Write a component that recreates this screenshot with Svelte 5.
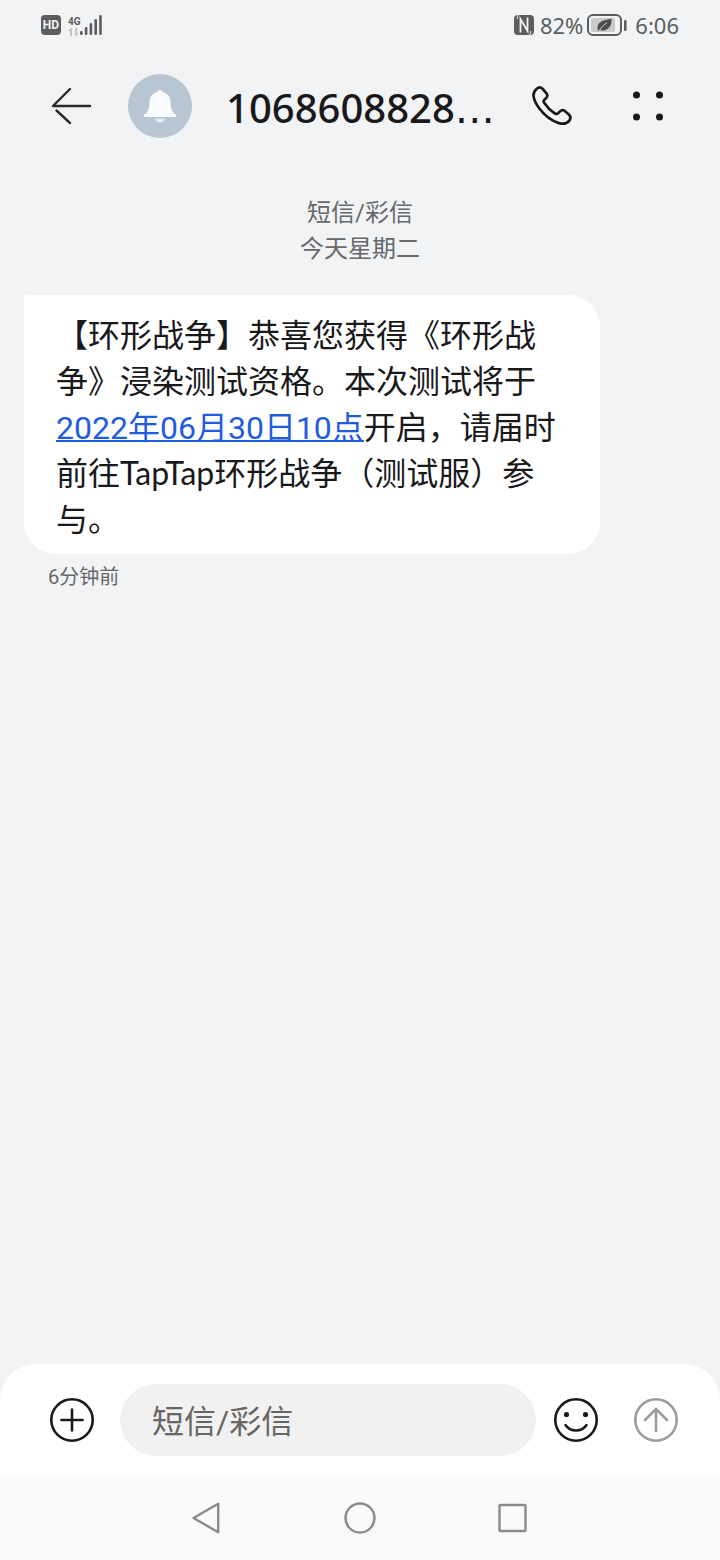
<script lang="ts">
	let draft = $state("");

	const sender = "1068608828";
	const channel = "短信/彩信";
	const day = "今天星期二";
	const sentAt = "6分钟前";
	const signalBars = [4, 8, 12, 16, 20];
</script>

<div class="screen">
	<div class="status-bar">
		<div class="status-group left">
			<span class="hd">HD</span>
			<div class="signal">
				<div class="network">
					<span>4G</span>
					<svg width="12" height="8" viewBox="0 0 12 8" fill="#c2c4c6">
						<path d="M3 0L0 3h2v5h2V0zM8 8l3-3H9V0H7v8z" />
					</svg>
				</div>
				<svg width="22" height="22" viewBox="0 0 22 22" fill="#5c5d5f">
					{#each signalBars as h, i}
						<rect x={i * 4.8} y={21 - h} width="2.6" height={h} rx="1.2" />
					{/each}
				</svg>
			</div>
		</div>
		<div class="status-group">
			<svg width="20" height="20" viewBox="0 0 20 20">
				<path d="M4 0h12q4 0 4 4v12q0 4-4 4H4q-4 0-4-4V4q0-4 4-4z" fill="#5c5d5f" />
				<path d="M6.500 17.500V4L13.500 16V2.500" fill="none" stroke="#f1f3f5" stroke-width="1.800" />
				<path d="M4.500 0Q3 1.500 3.200 4M15.500 20Q17 18.500 16.800 16" fill="none" stroke="#f1f3f5" />
			</svg>
			<span class="percent">82%</span>
			<svg width="40" height="22" viewBox="0 0 40 22">
				<rect x="1" y="1" width="33" height="20" rx="5" fill="none" stroke="#5c5d5f" stroke-width="2" />
				<rect x="4" y="4" width="24" height="14" rx="2" fill="#c9cbcd" />
				<rect x="37" y="6" width="2.6" height="11" rx="1.3" fill="#5c5d5f" />
				<path d="M11 17Q9 10 15 7Q19 5.500 24.500 4.500Q25 12 20.500 15Q17 17.500 13 16z" fill="#4c4d4f" />
				<path d="M12 17Q15 11.500 20 8.500" fill="none" stroke="#c9cbcd" />
			</svg>
			<span class="clock">6:06</span>
		</div>
	</div>

	<header>
		<button class="icon" aria-label="返回">
			<svg width="44" height="40" viewBox="0 0 44 40" fill="none" stroke="#2b2b2d" stroke-width="2.4" stroke-linecap="round" stroke-linejoin="round">
				<path d="M40 20H3L20 3M6.500 24.500L20 37" />
			</svg>
		</button>
		<div class="avatar">
			<svg width="32" height="34" viewBox="0 0 32 34" fill="#fafcfe">
				<path d="M16 1q1.800 0 2.800 2Q26 5 26.500 13q.3 8 3.500 12h1q1 0 1 1.500T30.500 28h-29Q0 28 0 26.500T1 25h1q3.200-4 3.500-12Q6 5 13.200 3q1-2 2.800-2z" />
				<path d="M11 29.500h10q-1 4-5 4t-5-4z" fill="#e3eaf1" />
			</svg>
		</div>
		<h1>{sender}<span class="more-digits">…</span></h1>
		<button class="icon" aria-label="拨打电话">
			<svg width="40" height="40" viewBox="1 1.200 41.800 41.800" fill="none" stroke="#19191b" stroke-width="2.800" stroke-linejoin="round">
				<path d="M6 4Q9 1.500 12 4L16.500 9.500Q17.800 11.500 16 13.500L14 15.500Q12.600 17 13.500 18.500Q18 25.500 25 30Q27 31 28.500 29.500L30.500 27.500Q32.500 25.500 35 27L39.500 31Q42.500 34 40 37.500Q36 42 29 40Q17 36 8.500 24.500Q3 17 2.500 11Q2.500 7 6 4z" />
			</svg>
		</button>
		<button class="icon menu" aria-label="更多">
			<svg width="32" height="32" viewBox="0 0 32 32" fill="#19191b">
				<circle cx="4.500" cy="5" r="3.500" />
				<circle cx="27.500" cy="5" r="3.500" />
				<circle cx="4.500" cy="27" r="3.500" />
				<circle cx="27.500" cy="27" r="3.500" />
			</svg>
		</button>
	</header>

	<main>
		<div class="thread-info">
			<div>{channel}</div>
			<div>{day}</div>
		</div>
		<div class="message">
			<p class="bubble">【环形战争】恭喜您获得《环形战争》浸染测试资格。本次测试将于<a href="#date">2022年06月30日10点</a>开启，请届时前往TapTap环形战争（测试服）参与。</p>
			<time>{sentAt}</time>
		</div>
	</main>

	<form class="composer" onsubmit={(e) => e.preventDefault()}>
		<button class="icon" type="button" aria-label="添加">
			<svg width="46" height="46" viewBox="0 0 46 46" fill="none" stroke="#19191b" stroke-width="2.600" stroke-linecap="round">
				<circle cx="23" cy="23" r="20.700" />
				<path d="M12.500 23h21M23 12.500v21" />
			</svg>
		</button>
		<input type="text" aria-label={channel} placeholder={channel} bind:value={draft} />
		<button class="icon" type="button" aria-label="表情">
			<svg width="46" height="46" viewBox="0 0 46 46" fill="none" stroke="#19191b" stroke-width="2.600" stroke-linecap="round">
				<circle cx="23" cy="23" r="20.700" />
				<path d="M12.500 28q3.500 5.500 10.500 5.500T33.500 28" />
				<g fill="#19191b" stroke="none">
					<circle cx="13.500" cy="17.500" r="2.600" />
					<circle cx="32.500" cy="17.500" r="2.600" />
				</g>
			</svg>
		</button>
		<button class="icon send" type="submit" aria-label="发送">
			<svg width="46" height="46" viewBox="0 0 46 46" fill="none" stroke="#9c9c9c" stroke-width="2.600" stroke-linecap="round" stroke-linejoin="round">
				<circle cx="23" cy="23" r="20.700" />
				<path d="M23 34V12M12 23L23 12L34 23" />
			</svg>
		</button>
	</form>

	<nav>
		<button class="icon" aria-label="后退">
			<svg width="32" height="32" viewBox="0 0 32 32">
				<path d="M26.200 1.800V30.200L1.500 16z" />
			</svg>
		</button>
		<button class="icon" aria-label="主屏幕">
			<svg width="32" height="32" viewBox="0 0 32 32">
				<circle cx="16" cy="16" r="14.500" />
			</svg>
		</button>
		<button class="icon" aria-label="最近任务">
			<svg width="32" height="32" viewBox="0 0 32 32">
				<rect x="3.500" y="3" width="26" height="26" rx="1" />
			</svg>
		</button>
	</nav>
</div>

<style>
	:global(body) {
		margin: 0;
		background: #f1f3f5;
	}
	.screen {
		min-height: 100vh;
		display: flex;
		flex-direction: column;
		font-family: Roboto, "Noto Sans CJK SC", sans-serif;
		color: #19191b;
	}
	.icon {
		display: flex;
		align-items: center;
		justify-content: center;
		padding: 0;
		border: none;
		background: none;
		cursor: pointer;
	}
	svg {
		display: block;
		flex: none;
	}

	.status-bar {
		height: 50px;
		padding: 0 41px;
		display: flex;
		align-items: center;
		justify-content: space-between;
		color: #5c5d5f;
	}
	.status-group {
		display: flex;
		align-items: center;
	}
	.left {
		gap: 7px;
	}
	.hd {
		width: 20px;
		height: 20px;
		line-height: 20px;
		border-radius: 4px;
		background: #5c5d5f;
		color: #f1f3f5;
		font-size: 12px;
		font-weight: 700;
		text-align: center;
	}
	.signal {
		display: flex;
		align-items: flex-end;
	}
	.network {
		width: 12px;
		display: flex;
		flex-direction: column;
		font-size: 10px;
		line-height: 12px;
		font-weight: 700;
	}
	.percent,
	.clock {
		font-family: "Noto Sans", sans-serif;
		font-size: 22px;
		line-height: 32px;
	}
	.percent {
		margin: 0 4px 0 6px;
	}
	.clock {
		margin-left: 8px;
	}

	header {
		height: 112px;
		padding: 0 48px 0 50px;
		display: flex;
		align-items: center;
	}
	.avatar {
		width: 64px;
		height: 64px;
		margin: 0 34px;
		border-radius: 50%;
		background: #b8c6d4;
		display: flex;
		align-items: center;
		justify-content: center;
		flex: none;
	}
	h1 {
		flex: 1;
		margin: 0;
		padding-top: 4px;
		font-family: "Noto Sans", sans-serif;
		font-size: 40px;
		line-height: 56px;
		font-weight: 500;
		white-space: nowrap;
	}
	.more-digits {
		font-family: "DejaVu Sans", sans-serif;
	}
	.menu {
		width: 48px;
		margin-left: 52px;
	}

	main {
		flex: 1;
		padding: 33px 24px;
	}
	.thread-info {
		font-size: 24px;
		line-height: 36px;
		color: #66686a;
		text-align: center;
	}
	.message {
		width: 86%;
		max-width: 576px;
		margin-top: 28px;
	}
	.bubble {
		margin: 0;
		padding: 17px 32px 12px;
		border-radius: 4px 32px 32px 32px;
		background: #fff;
		font-family: Lato, "Noto Sans CJK SC", sans-serif;
		font-size: 32px;
		line-height: 46px;
	}
	.bubble a {
		font-family: Roboto, "Noto Sans CJK SC", sans-serif;
		line-height: 1;
		color: #1f5ce0;
		text-decoration-thickness: 2px;
	}
	time {
		display: block;
		margin: 8px 24px;
		font-size: 20px;
		line-height: 30px;
		color: #66686a;
	}

	.composer {
		padding: 20px 41px 20px 49px;
		display: flex;
		align-items: center;
		border-radius: 36px 36px 0 0;
		background: #fff;
	}
	input {
		flex: 1;
		min-width: 0;
		height: 72px;
		box-sizing: border-box;
		margin: 0 17px 0 25px;
		padding: 4px 32px 0;
		border: none;
		border-radius: 36px;
		background: #f1f1f1;
		font: inherit;
		font-size: 32px;
		color: #19191b;
		outline: none;
	}
	input::placeholder {
		color: #666;
		opacity: 1;
	}
	.send {
		margin-left: 34px;
	}

	nav {
		height: 84px;
		display: flex;
		align-items: center;
		justify-content: center;
		gap: 120px;
		background: #fafafa;
	}
	nav svg {
		fill: none;
		stroke: #8a8a8a;
		stroke-width: 2.4;
		stroke-linejoin: round;
	}
</style>
